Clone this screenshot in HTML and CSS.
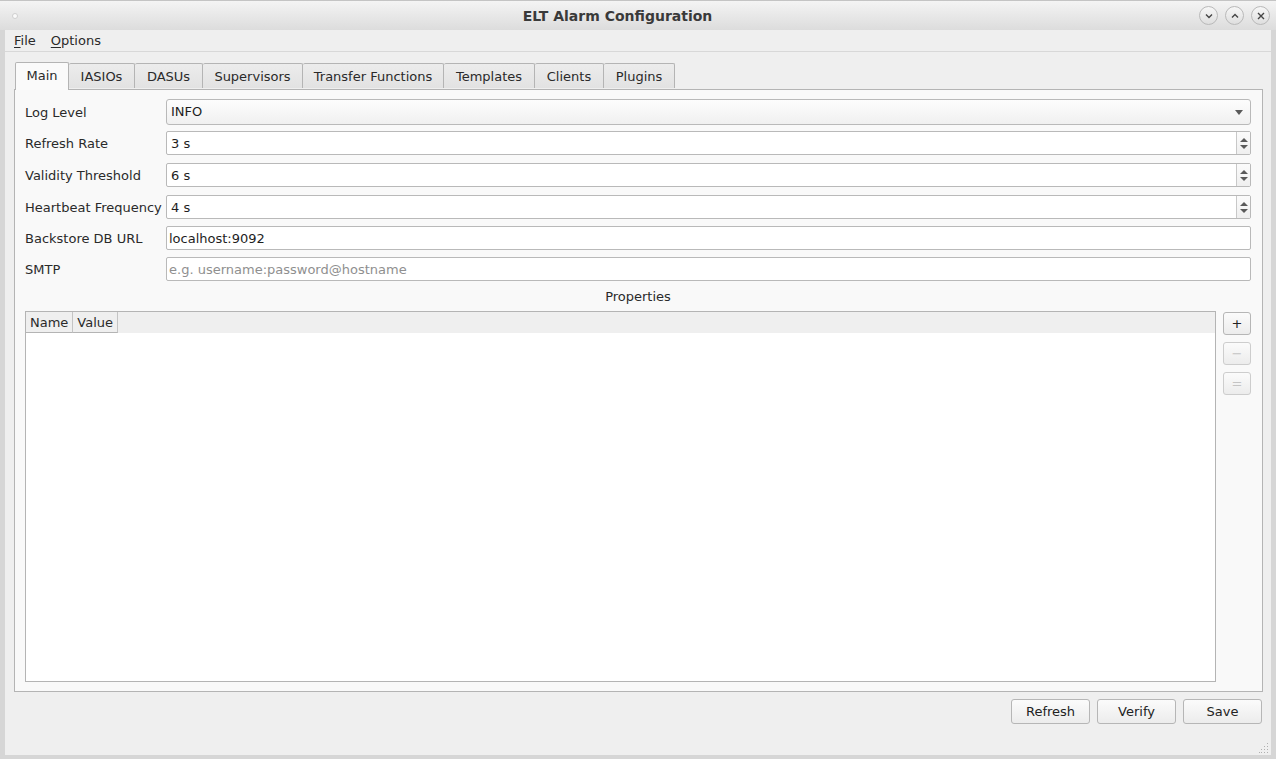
FILE: index.html
```html
<!DOCTYPE html>
<html>
<head>
<meta charset="utf-8">
<link rel="stylesheet" href="styles.css">
</head>
<body>
<div class="window">
  <div class="titlebar">
    <span class="dot"></span>
    <span class="title">ELT Alarm Configuration</span>
    <div class="wbtns">
      <span class="wbtn"><svg width="10" height="10" viewBox="0 0 10 10"><path d="M2 3.5 L5 6.5 L8 3.5" fill="none" stroke="#444" stroke-width="1.4"/></svg></span>
      <span class="wbtn"><svg width="10" height="10" viewBox="0 0 10 10"><path d="M2 6.5 L5 3.5 L8 6.5" fill="none" stroke="#444" stroke-width="1.4"/></svg></span>
      <span class="wbtn"><svg width="10" height="10" viewBox="0 0 10 10"><path d="M2 2 L8 8 M8 2 L2 8" fill="none" stroke="#444" stroke-width="1.4"/></svg></span>
    </div>
  </div>
  <div class="frame">
    <div class="menubar">
      <span class="menu"><u>F</u>ile</span>
      <span class="menu"><u>O</u>ptions</span>
    </div>
    <div class="tabwrap">
      <div class="tabbar">
        <span class="tab sel">Main</span>
        <span class="tab w66">IASIOs</span>
        <span class="tab w68">DASUs</span>
        <span class="tab w100">Supervisors</span>
        <span class="tab w141">Transfer Functions</span>
        <span class="tab w91">Templates</span>
        <span class="tab w69">Clients</span>
        <span class="tab w71">Plugins</span>
      </div>
      <div class="pane">
        <div class="form">
          <div class="row r-combo">
            <span class="lbl">Log Level</span>
            <div class="field combo"><span class="val">INFO</span><span class="carrow"></span></div>
          </div>
          <div class="row r-spin1">
            <span class="lbl">Refresh Rate</span>
            <div class="field spin"><span class="val">3 s</span><span class="sbtns"><span class="up"></span><span class="dn"></span></span></div>
          </div>
          <div class="row r-spin">
            <span class="lbl">Validity Threshold</span>
            <div class="field spin"><span class="val">6 s</span><span class="sbtns"><span class="up"></span><span class="dn"></span></span></div>
          </div>
          <div class="row r-spin">
            <span class="lbl">Heartbeat Frequency</span>
            <div class="field spin"><span class="val">4 s</span><span class="sbtns"><span class="up"></span><span class="dn"></span></span></div>
          </div>
          <div class="row r-edit">
            <span class="lbl">Backstore DB URL</span>
            <div class="field edit"><span class="val">localhost:9092</span></div>
          </div>
          <div class="row r-edit">
            <span class="lbl">SMTP</span>
            <div class="field edit"><span class="val ph">e.g. username:password@hostname</span></div>
          </div>
        </div>
        <div class="proptitle">Properties</div>
        <div class="props">
          <div class="table">
            <div class="thead">
              <span class="th">Name</span>
              <span class="th">Value</span>
            </div>
            <div class="tbody"></div>
          </div>
          <div class="sidebtns">
            <span class="sbtn">+</span>
            <span class="sbtn dis">−</span>
            <span class="sbtn dis">=</span>
          </div>
        </div>
      </div>
    </div>
    <div class="actions">
      <span class="btn">Refresh</span>
      <span class="btn">Verify</span>
      <span class="btn">Save</span>
    </div>
    <div class="statusbar">
      <svg class="grip" width="10" height="10" viewBox="0 0 10 10">
        <g fill="#b0b0b0">
          <rect x="8" y="0" width="1" height="1"/>
          <rect x="5" y="3" width="1" height="1"/><rect x="8" y="3" width="1" height="1"/>
          <rect x="2" y="6" width="1" height="1"/><rect x="5" y="6" width="1" height="1"/><rect x="8" y="6" width="1" height="1"/>
          <rect x="0" y="9" width="1" height="1"/><rect x="2" y="9" width="1" height="1"/><rect x="5" y="9" width="1" height="1"/><rect x="8" y="9" width="1" height="1"/>
        </g>
      </svg>
    </div>
  </div>
</div>
</body>
</html>
```
FILE: styles.css
```css
* { box-sizing: border-box; }
html, body { margin: 0; padding: 0; }
body {
  font-family: "DejaVu Sans", "Liberation Sans", sans-serif;
  font-size: 13px;
  color: #2a2a2a;
  background: #d6d6d6;
}
.window {
  width: 1276px;
  height: 759px;
  display: flex;
  flex-direction: column;
  background: #d6d6d6;
}
.titlebar {
  height: 30px;
  flex: none;
  display: flex;
  align-items: center;
  position: relative;
  background: linear-gradient(#f4f4f4, #dcdcdc);
  border-top: 1px solid #c4c4c4;
}
.dot {
  width: 6px;
  height: 6px;
  border-radius: 50%;
  background: #fbfbfb;
  border: 1px solid #cfcfcf;
  margin-left: 12px;
}
.title {
  flex: 1;
  text-align: center;
  font-weight: bold;
  font-size: 14px;
  color: #3a3a3a;
  margin-left: 18px;
}
.wbtns {
  display: flex;
  gap: 7px;
  margin-right: 6px;
}
.wbtn {
  width: 19px;
  height: 19px;
  border-radius: 50%;
  border: 1px solid #b9b9b9;
  background: linear-gradient(#f7f7f7, #dedede);
  display: flex;
  align-items: center;
  justify-content: center;
}
.frame {
  flex: 1;
  margin: 0 5px 4px 5px;
  background: #efefef;
  display: flex;
  flex-direction: column;
}
.menubar {
  height: 22px;
  flex: none;
  display: flex;
  align-items: center;
  gap: 15px;
  padding-left: 9px;
  border-bottom: 1px solid #d8d8d8;
  background: #efefef;
}
.menu u { text-decoration: underline; text-underline-offset: 2px; }
.tabwrap {
  margin: 9px 8px 0 9px;
  display: flex;
  flex-direction: column;
}
.tabbar {
  display: flex;
  align-items: flex-end;
  height: 28px;
  padding-left: 1px;
  position: relative;
  z-index: 1;
}
.tab {
  height: 25px;
  padding: 0;
  display: flex;
  align-items: center;
  justify-content: center;
  border: 1px solid #b4b4b4;
  border-bottom: none;
  border-left: none;
  border-radius: 2px 2px 0 0;
  background: linear-gradient(#ececec, #e2e2e2);
  margin-bottom: 1px;
}
.w66 { width: 66px; }
.w68 { width: 68px; }
.w100 { width: 100px; }
.w141 { width: 141px; }
.w91 { width: 91px; }
.w69 { width: 69px; }
.w71 { width: 71px; }
.tab.sel {
  width: 54px;
  border-left: 1px solid #b4b4b4;
  background: #fafafa;
  padding: 0 0 2px 0;
  height: 28px;
  margin-bottom: 0;
  position: relative;
  top: 1px;
}
.pane {
  height: 603px;
  border: 1px solid #b4b4b4;
  background: #f9f9f9;
  padding: 9px 11px 9px 10px;
  display: flex;
  flex-direction: column;
}
.form { display: flex; flex-direction: column; }
.row { display: flex; align-items: center; }
.lbl { width: 141px; flex: none; }
.field {
  flex: 1;
  height: 24px;
  border: 1px solid #b9b9b9;
  border-radius: 2px;
  background: #fff;
  display: flex;
  align-items: center;
}
.val { padding-left: 4px; flex: 1; color: #1e1e1e; }
.val.ph { color: #8f8f8f; padding-left: 2px; }
.edit .val { padding-left: 2px; }
.r-combo .field {
  height: 26px;
  border-radius: 3px;
  background: linear-gradient(#fdfdfd, #f0f0f0);
}
.r-combo .val { position: relative; top: -1px; }
.carrow {
  width: 0; height: 0;
  border-left: 4px solid transparent;
  border-right: 4px solid transparent;
  border-top: 5px solid #5a5a5a;
  margin-right: 7px;
}
.r-spin1 { margin-top: 6px; }
.r-spin { margin-top: 8px; }
.r-edit { margin-top: 7px; }
.spin .sbtns {
  width: 14px;
  height: 100%;
  border-left: 1px solid #c8c8c8;
  display: flex;
  flex-direction: column;
  align-items: center;
  justify-content: center;
  gap: 3px;
  background: linear-gradient(#fbfbfb, #efefef);
}
.up { width:0; height:0; border-left:4px solid transparent; border-right:4px solid transparent; border-bottom:4px solid #5a5a5a; }
.dn { width:0; height:0; border-left:4px solid transparent; border-right:4px solid transparent; border-top:4px solid #5a5a5a; }
.proptitle {
  text-align: center;
  margin-top: 7px;
  height: 23px;
  line-height: 17px;
}
.props {
  flex: 1;
  display: flex;
  gap: 7px;
}
.table {
  flex: 1;
  border: 1px solid #b4b4b4;
  background: #fff;
  display: flex;
  flex-direction: column;
}
.thead {
  height: 21px;
  background: #efefef;
  display: flex;
}
.th {
  padding: 0 4px;
  line-height: 21px;
  border-right: 1px solid #c4c4c4;
  border-bottom: 1px solid #b4b4b4;
  background: #efefef;
}
.tbody { flex: 1; background: #fff; }
.sidebtns {
  width: 28px;
  display: flex;
  flex-direction: column;
  gap: 7px;
  padding-top: 1px;
}
.sbtn {
  height: 23px;
  border: 1px solid #b6b6b6;
  border-radius: 3px;
  background: linear-gradient(#fbfbfb, #ececec);
  display: flex;
  align-items: center;
  justify-content: center;
  font-size: 13px;
  color: #222;
}
.sbtn.dis { color: #c4c4c4; border-color: #cdcdcd; }
.actions {
  display: flex;
  justify-content: flex-end;
  gap: 7px;
  padding: 7px 9px 0 0;
}
.btn {
  width: 79px;
  height: 25px;
  border: 1px solid #b6b6b6;
  border-radius: 3px;
  background: linear-gradient(#fbfbfb, #ececec);
  display: flex;
  align-items: center;
  justify-content: center;
  color: #222;
}
.statusbar {
  flex: 1;
  display: flex;
  justify-content: flex-end;
  align-items: flex-end;
  padding: 0 2px 2px 0;
}
```
